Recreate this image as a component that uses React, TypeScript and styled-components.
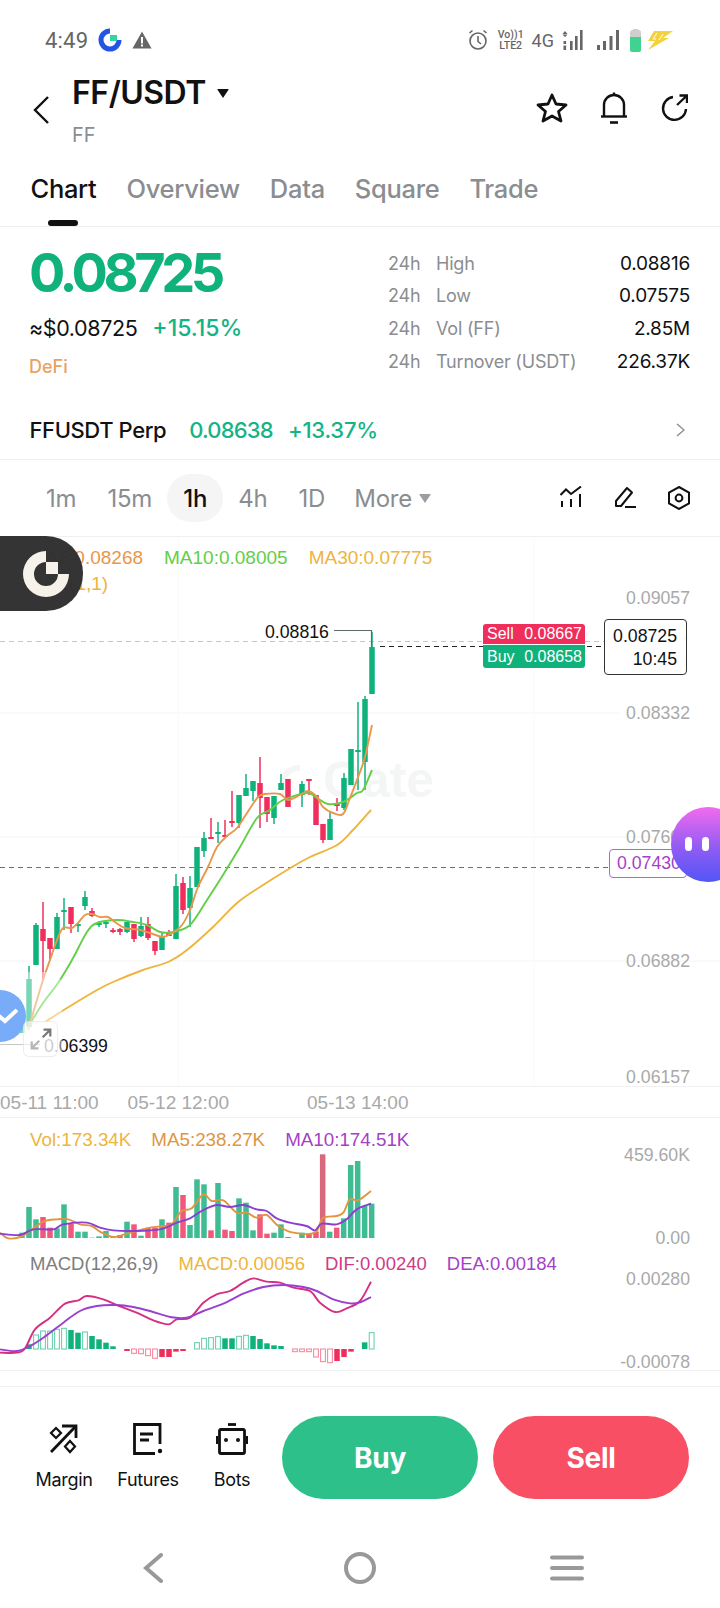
import * as React from "react";
import styled, { createGlobalStyle } from "styled-components";

const GlobalStyle = createGlobalStyle`
  html, body { margin: 0; padding: 0; background: #fff; }
  * { box-sizing: border-box; }
`;

const UI_FONT = `"Inter", "Liberation Sans", sans-serif`;
const CHART_FONT = `"Liberation Sans", Arial, sans-serif`;
const GREEN = "#10b27c";
const RED = "#f02e5c";
const GREY = "#8a8d91";

// [x, bodyTop, bodyBottom, wickTop, wickBottom, up?]
const candles: [number, number, number, number, number, boolean][] = [
  [22, 1017, 1033, 1017, 1033, true], [29, 979, 1027, 966, 1027, true], [36, 925, 965, 923, 965, true],
  [43, 929, 941, 902, 980, false], [50, 938, 949, 938, 960, false], [57, 917, 949, 913, 949, true],
  [64, 910, 912, 898, 930, true], [71, 907, 924, 907, 933, false], [78, 924, 926, 923, 932, true],
  [85, 897, 906, 891, 910, true], [92, 911, 916, 908, 917, false], [99, 923, 925, 921, 927, true],
  [106, 922, 924, 921, 928, true], [113, 930, 932, 928, 933, false], [120, 929, 932, 928, 935, false],
  [127, 922, 932, 922, 933, true], [134, 924, 939, 924, 942, false], [141, 926, 936, 917, 937, true],
  [148, 924, 938, 917, 940, false], [155, 941, 951, 941, 955, false], [162, 937, 950, 933, 950, true],
  [169, 932, 936, 930, 936, false], [176, 886, 939, 874, 939, true], [183, 883, 910, 877, 914, false],
  [190, 888, 908, 876, 927, true], [197, 847, 887, 847, 887, true], [204, 838, 851, 832, 857, true],
  [211, 837, 839, 818, 839, false], [218, 832, 834, 822, 843, true], [225, 835, 837, 820, 838, false],
  [232, 821, 823, 791, 827, false], [239, 795, 823, 795, 828, true], [246, 788, 796, 774, 796, true],
  [253, 781, 791, 781, 801, true], [260, 783, 798, 757, 828, false], [267, 797, 814, 797, 822, false],
  [274, 796, 818, 796, 824, true], [281, 783, 790, 774, 790, true], [288, 779, 807, 779, 807, false],
  [302, 784, 795, 781, 807, true], [309, 779, 781, 779, 795, false], [316, 795, 825, 795, 825, false],
  [323, 824, 840, 824, 843, false], [330, 819, 840, 812, 840, true], [337, 803, 806, 798, 811, false],
  [344, 778, 808, 773, 810, true], [351, 749, 785, 749, 785, true], [358, 750, 752, 702, 790, true],
  [365, 699, 762, 696, 790, true], [372, 647, 694, 632, 694, true],
];

const ma5 = [[28,1030],[43,980],[50,960],[57,940],[63,928],[72,928],[78,923],[85,915],[92,914],[100,917],[108,917],[115,922],[125,928],[140,930],[150,933],[163,937],[172,933],[182,925],[190,910],[198,887],[208,867],[217,847],[227,836],[237,828],[247,813],[258,797],[265,794],[280,794],[288,800],[300,795],[308,791],[317,797],[323,807],[333,813],[343,814],[350,798],[360,772],[365,757],[372,725]];
const ma10 = [[28,1027],[43,1003],[58,983],[72,960],[87,932],[97,923],[117,920],[133,922],[147,925],[160,932],[173,932],[190,925],[207,900],[223,875],[240,847],[257,818],[270,810],[283,800],[307,793],[317,798],[328,804],[343,802],[357,793],[363,790],[372,770]];
const ma30 = [[45,1022],[67,1008],[97,990],[113,982],[143,970],[168,962],[187,950],[213,927],[237,903],[260,887],[287,870],[310,857],[337,845],[353,830],[371,810]];

// lower panels: x and y as read off a 3x crop that starts at y=1110
const volBars: [number, number, boolean][] = [
  [66,365,true],[87,288,true],[108,325,true],[129,318,false],[150,350,false],[171,352,true],[192,280,true],[213,338,false],[234,362,true],[255,362,true],[276,380,false],[297,376,true],[318,360,true],[339,378,false],[360,372,false],[381,332,true],[402,340,false],[423,374,true],[444,350,false],[465,350,false],[486,325,true],[507,335,false],[528,228,true],[549,252,false],[570,342,true],[591,205,true],[612,220,true],[633,358,false],[654,216,true],[675,356,false],[696,360,false],[717,262,true],[738,275,true],[759,358,true],[780,310,false],[801,368,false],[822,365,true],[843,340,true],[864,378,false],[906,365,true],[927,368,false],[948,362,false],[968,130,false],[989,362,true],[1010,350,false],[1031,322,true],[1052,162,true],[1073,150,true],[1094,285,true],[1115,278,true],
];
const volMa5 = [[0,365],[25,382],[60,378],[90,360],[130,332],[170,325],[205,325],[240,340],[275,345],[300,362],[340,378],[380,368],[410,360],[450,350],[490,345],[515,340],[545,300],[575,292],[610,250],[635,270],[670,268],[710,305],[740,305],[770,320],[800,312],[835,345],[880,365],[945,365],[968,322],[1010,315],[1030,305],[1050,265],[1075,268],[1113,240]];
const volMa10 = [[0,368],[60,372],[100,355],[160,355],[190,340],[260,335],[300,350],[340,358],[400,360],[480,355],[530,335],[570,322],[610,297],[650,282],[690,288],[730,282],[770,295],[800,300],[830,322],[870,335],[920,345],[945,358],[965,338],[1010,340],[1040,325],[1070,295],[1113,278]];
const dif = [[0,725],[50,725],[75,712],[105,655],[150,620],[195,578],[235,568],[260,555],[310,565],[350,582],[410,605],[460,628],[505,640],[530,625],[570,620],[610,575],[650,550],[690,540],[730,515],[760,502],[800,512],[840,515],[880,530],[930,540],[960,575],[1005,603],[1040,592],[1080,570],[1113,512]];
const dea = [[0,715],[50,720],[90,705],[130,680],[190,635],[240,600],[290,585],[350,582],[400,588],[450,600],[510,618],[560,620],[610,600],[670,578],[730,548],[790,528],[850,522],[910,528],[950,540],[1000,565],[1050,577],[1080,574],[1113,558]];
// [x, end y, hollow?]
const macdBars: [number, number, boolean][] = [
  [87,700,false],[108,672,true],[129,660,true],[150,660,true],[171,655,true],[192,652,true],[213,657,false],[234,665,false],[255,663,true],[276,675,false],[297,685,false],[318,695,false],[339,706,false],
  [381,720,false],[402,727,true],[423,728,true],[444,734,true],[465,742,true],[486,738,false],[507,738,false],[528,722,false],[549,720,false],
  [591,695,true],[612,682,true],[633,680,true],[654,677,true],[675,682,false],[696,682,false],[717,676,true],[738,673,true],[759,675,false],[780,684,false],[801,697,false],[822,703,false],[843,705,false],
  [885,722,true],[906,722,true],[927,722,true],[948,738,true],[969,752,true],[990,755,true],[1011,750,false],[1032,738,false],[1053,722,false],
  [1094,694,false],[1115,665,true],
];

const crop = (raw: number[][]) => raw.map(([x, y]) => [x / 3, 1110 + y / 3]);

function smooth(p: number[][]) {
  let d = `M${p[0][0]} ${p[0][1]}`;
  for (let i = 0; i < p.length - 1; i++) {
    const a = p[Math.max(i - 1, 0)];
    const b = p[i];
    const c = p[i + 1];
    const e = p[Math.min(i + 2, p.length - 1)];
    d += ` C${b[0] + (c[0] - a[0]) / 6} ${b[1] + (c[1] - a[1]) / 6} ${c[0] - (e[0] - b[0]) / 6} ${c[1] - (e[1] - b[1]) / 6} ${c[0]} ${c[1]}`;
  }
  return d;
}

const Page = styled.div`
  position: relative;
  width: 720px;
  height: 1608px;
  overflow: hidden;
  background: #fff;
  font-family: ${UI_FONT};
  color: #111;
`;

const StatusBar = styled.div`
  display: flex;
  align-items: center;
  justify-content: space-between;
  height: 71px;
  padding: 9px 47px 0 45px;
`;

const StatusGroup = styled.div`
  display: flex;
  align-items: center;
`;

const StatusSlot = styled.span<{ $gap?: number }>`
  display: inline-flex;
  margin-left: ${(p) => p.$gap ?? 0}px;
`;

const Clock = styled.span`
  font-family: Roboto, sans-serif;
  font-size: 22px;
  color: #666;
  letter-spacing: 0.2px;
`;

const VoLte = styled.span`
  display: flex;
  flex-direction: column;
  font-family: Roboto, sans-serif;
  font-size: 10.5px;
  line-height: 11px;
  font-weight: 500;
  color: #666;
  text-align: center;
`;

const FourG = styled.span`
  font-family: Roboto, sans-serif;
  font-size: 18px;
  color: #666;
`;

const Header = styled.div`
  display: flex;
  align-items: flex-start;
  height: 89px;
  padding: 6px 32px 0 33px;
`;

const Back = styled.svg`
  margin-top: 19px;
  flex: none;
`;

const TitleBlock = styled.div`
  margin-left: 23px;
  flex: 1;
`;

const TitleRow = styled.div`
  display: flex;
  align-items: center;
  gap: 11px;
  font-size: 32px;
  line-height: 32px;
  font-weight: 600;
  letter-spacing: -0.5px;
`;

const Caret = styled.span<{ $size: number; $color: string }>`
  display: inline-block;
  width: 0;
  height: 0;
  border-left: ${(p) => p.$size}px solid transparent;
  border-right: ${(p) => p.$size}px solid transparent;
  border-top: ${(p) => p.$size * 1.5}px solid ${(p) => p.$color};
  border-radius: 1px;
`;

const Sub = styled.div`
  margin-top: 14px;
  font-size: 20px;
  line-height: 24px;
  color: ${GREY};
`;

const HeaderIcons = styled.div`
  display: flex;
  align-items: center;
  gap: 32px;
  margin-top: 15px;
`;

const Tabs = styled.div`
  display: flex;
  gap: 30px;
  height: 67px;
  padding: 13px 0 0 30.5px;
  border-bottom: 1px solid #eeeeee;
`;

const Tab = styled.div<{ $active?: boolean }>`
  position: relative;
  height: 32px;
  font-size: 25.5px;
  line-height: 32px;
  font-weight: 500;
  letter-spacing: -0.3px;
  color: ${(p) => (p.$active ? "#111" : GREY)};

  ${(p) =>
    p.$active &&
    `&::after {
      content: "";
      position: absolute;
      left: 17px;
      top: 47px;
      width: 30px;
      height: 6px;
      border-radius: 3px;
      background: #111;
    }`}
`;

const Stats = styled.div`
  display: flex;
  justify-content: space-between;
  height: 173px;
  padding: 16px 30px 0 29px;
`;

const PriceCol = styled.div`
  display: flex;
  flex-direction: column;
`;

const BigPrice = styled.div`
  font-size: 54px;
  line-height: 60px;
  font-weight: 700;
  letter-spacing: -4.4px;
  color: ${GREEN};
`;

const FiatRow = styled.div`
  display: flex;
  align-items: baseline;
  gap: 15px;
  margin-top: 12px;
  font-size: 21.5px;
  line-height: 26px;
  letter-spacing: -0.4px;
`;

const Up = styled.span`
  color: #13b485;
  font-size: 23px;
  font-weight: 500;
  letter-spacing: 0;
`;

const Tag = styled.div`
  margin-top: 14px;
  font-size: 18px;
  line-height: 24px;
  font-weight: 500;
  color: #e9a263;
`;

const StatTable = styled.div`
  width: 302px;
  padding-top: 4px;
`;

const StatRow = styled.div`
  display: flex;
  height: 32.67px;
  align-items: center;
  font-size: 18px;
  letter-spacing: -0.2px;
  color: ${GREY};
`;

const StatPeriod = styled.span`
  width: 48px;
`;

const StatValue = styled.span`
  margin-left: auto;
  font-size: 19px;
  color: #111;
`;

const PerpRow = styled.div`
  display: flex;
  align-items: center;
  height: 60px;
  padding: 0 35px 0 29.5px;
  border-bottom: 1px solid #eeeeee;
  font-size: 22px;
  letter-spacing: -0.4px;
`;

const PerpName = styled.span`
  font-weight: 500;
  margin-right: 23px;
`;

const PerpValue = styled.span<{ $track: number }>`
  color: #13b485;
  font-weight: 500;
  letter-spacing: ${(p) => p.$track}px;
  margin-right: 15px;
`;

const Push = styled.svg`
  margin-left: auto;
`;

const Intervals = styled.div`
  display: flex;
  align-items: center;
  gap: 31px;
  height: 77px;
  padding: 0 30px 0 46px;
  border-bottom: 1px solid #f0f0f0;
`;

const Interval = styled.div<{ $active?: boolean }>`
  position: relative;
  font-size: 24px;
  letter-spacing: -0.2px;
  color: ${(p) => (p.$active ? "#111" : GREY)};
  font-weight: ${(p) => (p.$active ? 500 : 400)};
  z-index: 0;

  ${(p) =>
    p.$active &&
    `&::before {
      content: "";
      position: absolute;
      z-index: -1;
      left: -16px;
      right: -16px;
      top: -10px;
      bottom: -9px;
      border-radius: 24px;
      background: #f5f5f5;
    }`}
`;

const MoreItem = styled(Interval)`
  display: flex;
  align-items: center;
  gap: 7px;
  margin-left: -2px;
`;

const ChartTools = styled.div`
  display: flex;
  gap: 32px;
  margin-left: auto;
`;

const PricePanel = styled.div`
  position: relative;
  height: 549px;
`;

const ChartSvg = styled.svg`
  display: block;
  overflow: visible;
`;

const Legend = styled.div<{ $top?: number; $size: number; $gap?: number }>`
  display: flex;
  gap: ${(p) => p.$gap ?? 21}px;
  padding: ${(p) => p.$top ?? 0}px 30px 0;
  font-family: ${CHART_FONT};
  font-size: ${(p) => p.$size}px;
  line-height: 22px;
`;

const PriceLegend = styled(Legend)`
  position: absolute;
  left: 0;
  top: 0;
`;

const LegendItem = styled.span<{ $color: string }>`
  color: ${(p) => p.$color};
  white-space: nowrap;
`;

const BookTag = styled.div`
  position: absolute;
  left: 483px;
  top: 87px;
  width: 102px;
  font-family: ${CHART_FONT};
  font-size: 16px;
  color: #fff;
`;

const BookRow = styled.div<{ $bg: string; $h: number; $radius: string }>`
  display: flex;
  justify-content: space-between;
  align-items: center;
  height: ${(p) => p.$h}px;
  margin-bottom: 1px;
  padding: 0 3px 0 4px;
  background: ${(p) => p.$bg};
  border-radius: ${(p) => p.$radius};
`;

const LastPriceBox = styled.div`
  position: absolute;
  left: 604px;
  top: 82px;
  width: 83px;
  height: 56px;
  padding: 5px 9px 0 0;
  background: #fff;
  border: 1px solid #333;
  border-radius: 4px;
  font-family: ${CHART_FONT};
  font-size: 17.7px;
  line-height: 23px;
  text-align: right;
  color: #111;
`;

const AlertBox = styled.div`
  position: absolute;
  left: 609px;
  top: 312px;
  width: 78px;
  height: 29px;
  padding-left: 7px;
  background: #fff;
  border: 1px solid #b565d6;
  border-radius: 4px;
  font-family: ${CHART_FONT};
  font-size: 17.7px;
  line-height: 27px;
  color: #a53fc8;
`;

const GateBadge = styled.div`
  position: absolute;
  left: 0;
  top: -1px;
  display: flex;
  align-items: center;
  width: 83px;
  height: 75px;
  padding-left: 23px;
  background: rgba(45, 45, 45, 0.97);
  border-radius: 0 37px 37px 0;
`;

const ChatBubble = styled.div`
  position: absolute;
  left: 671px;
  top: 270px;
  display: flex;
  gap: 10px;
  width: 74px;
  height: 75px;
  padding: 30px 0 0 14px;
  border-radius: 50%;
  background: linear-gradient(180deg, #f26bee 0%, #8f5cf4 55%, #5355f6 100%);
`;

const BubbleEye = styled.span`
  width: 7px;
  height: 14px;
  border-radius: 4px;
  background: #fff;
`;

const VerifiedHaze = styled.div`
  position: absolute;
  left: 0;
  top: 435px;
  width: 62px;
  height: 90px;
  background: rgba(255, 255, 255, 0.45);
  border-radius: 0 14px 14px 0;
`;

const VerifiedBadge = styled.div`
  position: absolute;
  left: -26px;
  top: 453px;
  display: flex;
  align-items: center;
  justify-content: flex-end;
  width: 52px;
  height: 52px;
  padding-right: 8px;
  border-radius: 50%;
  background: #78abf8;
`;

const ZoomWidget = styled.div`
  position: absolute;
  left: 23px;
  top: 484px;
  display: flex;
  align-items: center;
  justify-content: center;
  width: 35px;
  height: 36px;
  border: 1px solid rgba(225, 225, 225, 0.6);
  border-radius: 6px;
  background: rgba(255, 255, 255, 0.6);
`;

const DateAxis = styled.div`
  display: flex;
  align-items: center;
  height: 32px;
  padding-top: 2px;
  border-top: 1px solid #f0f0f0;
  border-bottom: 1px solid #f0f0f0;
  font-family: ${CHART_FONT};
  font-size: 19px;
  color: #a9a9a9;
`;

const DateLabel = styled.span<{ $left: number }>`
  margin-left: ${(p) => p.$left}px;
  white-space: nowrap;
`;

const MacdPanel = styled.div`
  height: 124px;
  border-bottom: 1px solid #f0f0f0;
`;

const VolPanel = styled.div`
  height: 129px;
`;

const ActionBar = styled.div`
  display: flex;
  margin-top: 15px;
  height: 144px;
  padding: 29px 30px 0 22px;
  border-top: 1px solid #f0f0f0;
`;

const Tool = styled.div`
  display: flex;
  flex-direction: column;
  align-items: center;
  width: 84px;
  padding-top: 7px;
`;

const ToolLabel = styled.div`
  margin-top: 13px;
  font-size: 18px;
  line-height: 24px;
  letter-spacing: -0.3px;
  color: #111;
`;

const TradeButton = styled.div<{ $bg: string; $gap: number }>`
  display: flex;
  align-items: center;
  justify-content: center;
  width: 196px;
  height: 83px;
  margin-left: ${(p) => p.$gap}px;
  border-radius: 42px;
  background: ${(p) => p.$bg};
  color: #fff;
  font-size: 28px;
  font-weight: 700;
  letter-spacing: -0.3px;
`;

const NavBar = styled.div`
  display: grid;
  grid-template-columns: repeat(3, 1fr);
  justify-items: center;
  align-items: center;
  height: 76px;
  padding: 0 50px;
`;

function Candles() {
  return (
    <g>
      {candles.map(([x, top, bottom, wt, wb, up]) => (
        <g key={x} fill={up ? GREEN : RED} stroke={up ? GREEN : RED}>
          <line x1={x} x2={x} y1={wt} y2={wb} strokeWidth={1.5} />
          <rect x={x - 2.75} y={top} width={5.5} height={bottom - top} stroke="none" />
        </g>
      ))}
    </g>
  );
}

function Axis({ y, children }: { y: number; children: React.ReactNode }) {
  return (
    <text x={690} y={y + 6} textAnchor="end" fontFamily={CHART_FONT} fontSize={17.7} fill="#a9a9a9">
      {children}
    </text>
  );
}

function Wave({ points, color }: { points: number[][]; color: string }) {
  return <path d={smooth(points)} fill="none" stroke={color} strokeWidth={1.9} strokeLinejoin="round" />;
}

export default function App() {
  return (
    <Page>
      <GlobalStyle />

      <StatusBar>
        <StatusGroup>
          <Clock>4:49</Clock>
          <StatusSlot $gap={10}>
            <svg width="24" height="24" viewBox="0 0 24 24">
              <path d="M12 3 A9 9 0 1 0 21 12" fill="none" stroke="#2354e6" strokeWidth="5" />
              <rect x="12" y="7" width="7" height="6" fill="#35d3a9" />
            </svg>
          </StatusSlot>
          <StatusSlot $gap={10}>
            <svg width="20" height="18" viewBox="0 0 20 18">
              <path d="M10 0.5 L19.5 17.5 H0.5 Z" fill="#666" />
              <rect x="9" y="6" width="2" height="6.5" fill="#fff" />
              <rect x="9" y="13.5" width="2" height="2" fill="#fff" />
            </svg>
          </StatusSlot>
        </StatusGroup>
        <StatusGroup>
          <svg width="20" height="22" viewBox="0 0 20 22" fill="none" stroke="#666" strokeWidth="1.6">
            <circle cx="10" cy="12" r="8" />
            <path d="M10 7 V12.5 L13 15" />
            <path d="M1.5 4 L4.5 1.5 M18.5 4 L15.5 1.5" />
          </svg>
          <StatusSlot $gap={10}>
            <VoLte>
              <span>Vo))1</span>
              <span>LTE2</span>
            </VoLte>
          </StatusSlot>
          <StatusSlot $gap={8}>
            <FourG>4G</FourG>
          </StatusSlot>
          <StatusSlot $gap={8}>
            <svg width="21" height="20" viewBox="0 0 21 20" fill="#666">
              <path d="M3 0 L5.5 3 H0.5 Z M3 6 L0.5 3.5 H5.5 Z" transform="translate(0 1)" />
              <rect x="1.5" y="11" width="2.6" height="3" />
              <rect x="1.5" y="15.5" width="2.6" height="4.5" />
              <rect x="8" y="11" width="2.6" height="9" />
              <rect x="13" y="6" width="2.6" height="14" />
              <rect x="18" y="0" width="2.6" height="20" />
            </svg>
          </StatusSlot>
          <StatusSlot $gap={14}>
            <svg width="22" height="20" viewBox="0 0 22 20" fill="#666">
              <rect x="0" y="15" width="3" height="5" />
              <rect x="6" y="11" width="3" height="9" />
              <rect x="12.5" y="6" width="3" height="14" />
              <rect x="19" y="0" width="3" height="20" />
            </svg>
          </StatusSlot>
          <StatusSlot $gap={11}>
            <svg width="11" height="23" viewBox="0 0 11 23">
              <rect x="0" y="1" width="11" height="22" rx="2.5" fill="#cfcfcf" />
              <rect x="3" y="0" width="5" height="2" fill="#cfcfcf" />
              <path d="M0 8 H11 V20.5 A2.5 2.5 0 0 1 8.5 23 H2.5 A2.5 2.5 0 0 1 0 20.5 Z" fill="#3fd38f" />
            </svg>
          </StatusSlot>
          <StatusSlot $gap={6}>
            <svg width="26" height="19" viewBox="0 0 26 19">
              <path d="M7 0 H26 L16 7 H22 L1 19 L8 10 H1 Z" fill="#f3d23c" />
              <path d="M10 2 L6 8 H9 M16 3 L12 9" fill="none" stroke="#fff" strokeWidth="1" />
            </svg>
          </StatusSlot>
        </StatusGroup>
      </StatusBar>

      <Header>
        <Back width="16" height="28" viewBox="0 0 16 28" fill="none" stroke="#111" strokeWidth="2.4">
          <path d="M15 1 L2 14 L15 27" />
        </Back>
        <TitleBlock>
          <TitleRow>
            FF/USDT
            <Caret $size={6} $color="#111" />
          </TitleRow>
          <Sub>FF</Sub>
        </TitleBlock>
        <HeaderIcons>
          <svg width="32" height="30" viewBox="0 0 32 30" fill="none" stroke="#111" strokeWidth="2.8" strokeLinejoin="round">
            <path d="M16 2 L20 11 L30 12 L22.5 18.5 L25 28 L16 23 L7 28 L9.5 18.5 L2 12 L12 11 Z" />
          </svg>
          <svg width="28" height="32" viewBox="0 0 28 32" fill="none" stroke="#111" strokeWidth="2.4">
            <path d="M4 24 V13 A10 10 0 0 1 24 13 V24" />
            <path d="M1 24.5 H27" />
            <path d="M14 0.5 V3" />
            <path d="M10 30.5 H18" strokeWidth="2.6" />
          </svg>
          <svg width="28" height="28" viewBox="0 0 28 28" fill="none" stroke="#111" strokeWidth="2.4">
            <path d="M13 3 A11.5 11.5 0 1 0 26 15" />
            <path d="M17 11 L27 1.5 M19.5 1.5 H27 V9" />
          </svg>
        </HeaderIcons>
      </Header>

      <Tabs>
        <Tab $active>Chart</Tab>
        <Tab>Overview</Tab>
        <Tab>Data</Tab>
        <Tab>Square</Tab>
        <Tab>Trade</Tab>
      </Tabs>

      <Stats>
        <PriceCol>
          <BigPrice>0.08725</BigPrice>
          <FiatRow>
            <span>≈$0.08725</span>
            <Up>+15.15%</Up>
          </FiatRow>
          <Tag>DeFi</Tag>
        </PriceCol>
        <StatTable>
          <StatRow><StatPeriod>24h</StatPeriod>High<StatValue>0.08816</StatValue></StatRow>
          <StatRow><StatPeriod>24h</StatPeriod>Low<StatValue>0.07575</StatValue></StatRow>
          <StatRow><StatPeriod>24h</StatPeriod>Vol (FF)<StatValue>2.85M</StatValue></StatRow>
          <StatRow><StatPeriod>24h</StatPeriod>Turnover (USDT)<StatValue>226.37K</StatValue></StatRow>
        </StatTable>
      </Stats>

      <PerpRow>
        <PerpName>FFUSDT Perp</PerpName>
        <PerpValue $track={-0.8}>0.08638</PerpValue>
        <PerpValue $track={-0.2}>+13.37%</PerpValue>
        <Push width="9" height="14" viewBox="0 0 9 14" fill="none" stroke="#8a8d91" strokeWidth="1.4">
          <path d="M1 1 L8 7 L1 13" />
        </Push>
      </PerpRow>

      <Intervals>
        <Interval>1m</Interval>
        <Interval>15m</Interval>
        <Interval $active>1h</Interval>
        <Interval>4h</Interval>
        <Interval>1D</Interval>
        <MoreItem>
          More
          <Caret $size={6} $color="#9a9da1" />
        </MoreItem>
        <ChartTools>
          <svg width="22" height="22" viewBox="0 0 22 22" fill="none" stroke="#111" strokeWidth="2">
            <path d="M0.5 9 L6 3.5 L11 8 L21 0.5" />
            <path d="M2 15 V21 M11 13 V21 M20 8 V21" />
          </svg>
          <svg width="22" height="22" viewBox="0 0 22 22" fill="none" stroke="#111" strokeWidth="2" strokeLinejoin="round">
            <path d="M2 15 L13 2 L18 6.5 L7 20 H2 Z" />
            <path d="M11 21 H22" />
          </svg>
          <svg width="22" height="24" viewBox="0 0 22 24" fill="none" stroke="#111" strokeWidth="2">
            <path d="M11 1 L21 6.5 V17.5 L11 23 L1 17.5 V6.5 Z" />
            <circle cx="11" cy="12" r="3.4" />
          </svg>
        </ChartTools>
      </Intervals>

      <PricePanel>
        <ChartSvg width="720" height="549" viewBox="0 537 720 549">
          <g stroke="#f5f5f5" strokeWidth="1">
            <line x1="0" x2="620" y1="713" y2="713" />
            <line x1="0" x2="720" y1="837" y2="837" />
            <line x1="0" x2="720" y1="961" y2="961" />
          </g>
          <g stroke="#fafafa" strokeWidth="1">
            <line x1="178" x2="178" y1="537" y2="1086" />
            <line x1="534" x2="534" y1="537" y2="1086" />
          </g>
          <path d="M300 768 A16 16 0 0 0 288 796" fill="none" stroke="#f4f5f5" strokeWidth="6" />
          <text x="323" y="797" fontFamily={CHART_FONT} fontWeight="700" fontSize="50" fill="#f4f5f5">Gate</text>
          <line x1="0" x2="610" y1="641.5" y2="641.5" stroke="#eec36a" strokeWidth="1" strokeDasharray="5 4" />
          <line x1="380" x2="604" y1="646.5" y2="646.5" stroke="#222" strokeWidth="1" strokeDasharray="5 4" />
          <line x1="0" x2="609" y1="867.5" y2="867.5" stroke="#8d56a8" strokeWidth="1" strokeDasharray="5 4" />
          <Candles />
          <Wave points={ma30} color="#eeb43c" />
          <Wave points={ma10} color="#62cf47" />
          <Wave points={ma5} color="#e8974a" />
          <path d="M334 630.5 H371.5 V647" fill="none" stroke="#5d6b6b" strokeWidth="1.2" />
          <text x="265" y="638" fontFamily={CHART_FONT} fontSize="17.7" fill="#111">0.08816</text>
          <path d="M0 1044.5 H40" stroke="#9a9a9a" strokeWidth="1.2" />
          <text x="44" y="1052" fontFamily={CHART_FONT} fontSize="17.7" fill="#111">0.06399</text>
          <Axis y={598}>0.09057</Axis>
          <Axis y={713}>0.08332</Axis>
          <Axis y={837}>0.07607</Axis>
          <Axis y={961}>0.06882</Axis>
          <Axis y={1077}>0.06157</Axis>
        </ChartSvg>

        <PriceLegend $top={10} $size={19}>
          <LegendItem $color="#e8974a">MA5:0.08268</LegendItem>
          <LegendItem $color="#62cf47">MA10:0.08005</LegendItem>
          <LegendItem $color="#eeb43c">MA30:0.07775</LegendItem>
        </PriceLegend>
        <PriceLegend $top={36} $size={19}>
          <LegendItem $color="#eeb43c">SAR(1,1)</LegendItem>
        </PriceLegend>

        <BookTag>
          <BookRow $bg={RED} $h={20} $radius="3px 3px 0 0">
            <span>Sell</span>
            <span>0.08667</span>
          </BookRow>
          <BookRow $bg={GREEN} $h={23} $radius="0 0 3px 3px">
            <span>Buy</span>
            <span>0.08658</span>
          </BookRow>
        </BookTag>

        <LastPriceBox>
          0.08725
          <br />
          10:45
        </LastPriceBox>

        <AlertBox>0.07430</AlertBox>

        <GateBadge>
          <svg width="46" height="46" viewBox="0 0 46 46">
            <path d="M23 0 A23 23 0 1 0 46 23 H35 A12 12 0 1 1 23 11 Z" fill="#f6f2e9" />
            <rect x="23" y="11" width="12" height="12" fill="#f6f2e9" />
          </svg>
        </GateBadge>

        <ChatBubble>
          <BubbleEye />
          <BubbleEye />
        </ChatBubble>

        <VerifiedHaze />
        <VerifiedBadge>
          <svg width="20" height="16" viewBox="0 0 20 16" fill="none" stroke="#fff" strokeWidth="4">
            <path d="M1 8 L7 13 L19 2" />
          </svg>
        </VerifiedBadge>
        <ZoomWidget>
          <svg width="22" height="22" viewBox="0 0 26 26" fill="none" strokeWidth="2.6">
            <path d="M15 11 L24 2 M16 2 H24 V10" stroke="#777" />
            <path d="M11 15 L2 24 M2 16 V24 H10" stroke="#b5b5b5" />
          </svg>
        </ZoomWidget>
      </PricePanel>

      <DateAxis>
        <DateLabel $left={0}>05-11 11:00</DateLabel>
        <DateLabel $left={29}>05-12 12:00</DateLabel>
        <DateLabel $left={78}>05-13 14:00</DateLabel>
      </DateAxis>

      <VolPanel>
        <Legend $top={11} $size={18.8} $gap={20}>
          <LegendItem $color="#eeb43c">Vol:173.34K</LegendItem>
          <LegendItem $color="#e0963f">MA5:238.27K</LegendItem>
          <LegendItem $color="#a53fc8">MA10:174.51K</LegendItem>
        </Legend>
        <ChartSvg width="720" height="95" viewBox="0 1150 720 95">
          {crop(volBars.map(([x, y]) => [x, y])).map(([x, y], i) => (
            <rect
              key={x}
              x={x - 2.75}
              y={y}
              width={5.5}
              height={1237 - y}
              fill={volBars[i][2] ? "#3fbc93" : volBars[i][0] === 968 ? "#d9687c" : "#f1587a"}
            />
          ))}
          <Wave points={crop(volMa5)} color="#e0963f" />
          <Wave points={crop(volMa10)} color="#8a3fd0" />
          <Axis y={1154}>459.60K</Axis>
          <Axis y={1237}>0.00</Axis>
        </ChartSvg>
      </VolPanel>

      <MacdPanel>
        <Legend $top={6} $size={18.5} $gap={20}>
          <LegendItem $color="#7d7d7d">MACD(12,26,9)</LegendItem>
          <LegendItem $color="#eeb43c">MACD:0.00056</LegendItem>
          <LegendItem $color="#cf3a86">DIF:0.00240</LegendItem>
          <LegendItem $color="#a53fc8">DEA:0.00184</LegendItem>
        </Legend>
        <ChartSvg width="720" height="95" viewBox="0 1274 720 95">
          {macdBars.map(([zx, zy, hollow]) => {
            const x = zx / 3;
            const end = 1110 + zy / 3;
            const base = 1110 + 714 / 3;
            const up = end < base;
            const top = Math.min(end, base);
            const h = Math.abs(end - base);
            return hollow ? (
              <rect key={zx} x={x - 2.4} y={top} width={4.8} height={h} fill="#fff" stroke={up ? "#6fcfb0" : "#f58aa0"} strokeWidth={1.1} />
            ) : (
              <rect key={zx} x={x - 2.75} y={top} width={5.5} height={h} fill={up ? GREEN : RED} />
            );
          })}
          <Wave points={crop(dif)} color="#d4307f" />
          <Wave points={crop(dea)} color="#9a3fd0" />
          <Axis y={1278}>0.00280</Axis>
          <Axis y={1361}>-0.00078</Axis>
        </ChartSvg>
      </MacdPanel>

      <ActionBar>
        <Tool>
          <svg width="30" height="32" viewBox="0 0 30 32" fill="none" stroke="#111" strokeWidth="2.8">
            <path d="M2 29 L27 3" />
            <path d="M13 3 H27 V15" />
            <path d="M7 5 L12 10 L7 15 L2 10 Z" strokeWidth="2.2" />
            <path d="M21 18 L26 23.5 L21 29 L16 23.5 Z" strokeWidth="2.2" />
          </svg>
          <ToolLabel>Margin</ToolLabel>
        </Tool>
        <Tool>
          <svg width="30" height="32" viewBox="0 0 30 32" fill="none" stroke="#111" strokeWidth="2.8">
            <path d="M27 21 V1.5 H1.5 V30.5 H22" />
            <path d="M7 11 H20 M7 17 H16" />
            <circle cx="27" cy="28" r="2.2" fill="#111" stroke="none" />
          </svg>
          <ToolLabel>Futures</ToolLabel>
        </Tool>
        <Tool>
          <svg width="32" height="32" viewBox="0 0 32 32" fill="none" stroke="#111" strokeWidth="2.8">
            <path d="M12 1.5 H20" />
            <rect x="3.5" y="6.5" width="25" height="24" rx="1.5" />
            <path d="M1 13 V21 M31 13 V21" />
            <circle cx="10" cy="17" r="2" fill="#111" stroke="none" />
            <circle cx="22" cy="17" r="2" fill="#111" stroke="none" />
          </svg>
          <ToolLabel>Bots</ToolLabel>
        </Tool>
        <TradeButton $bg="#2dc08a" $gap={8}>Buy</TradeButton>
        <TradeButton $bg="#f94f64" $gap={15}>Sell</TradeButton>
      </ActionBar>

      <NavBar>
        <svg width="20" height="30" viewBox="0 0 20 30" fill="none" stroke="#999" strokeWidth="4" strokeLinecap="round">
          <path d="M18 2 L3 15 L18 28" />
        </svg>
        <svg width="32" height="32" viewBox="0 0 32 32" fill="none" stroke="#999" strokeWidth="4">
          <circle cx="16" cy="16" r="14" />
        </svg>
        <svg width="34" height="26" viewBox="0 0 34 26" fill="none" stroke="#999" strokeWidth="4" strokeLinecap="round">
          <path d="M2 2.5 H32 M2 13 H32 M2 23.5 H32" />
        </svg>
      </NavBar>
    </Page>
  );
}
